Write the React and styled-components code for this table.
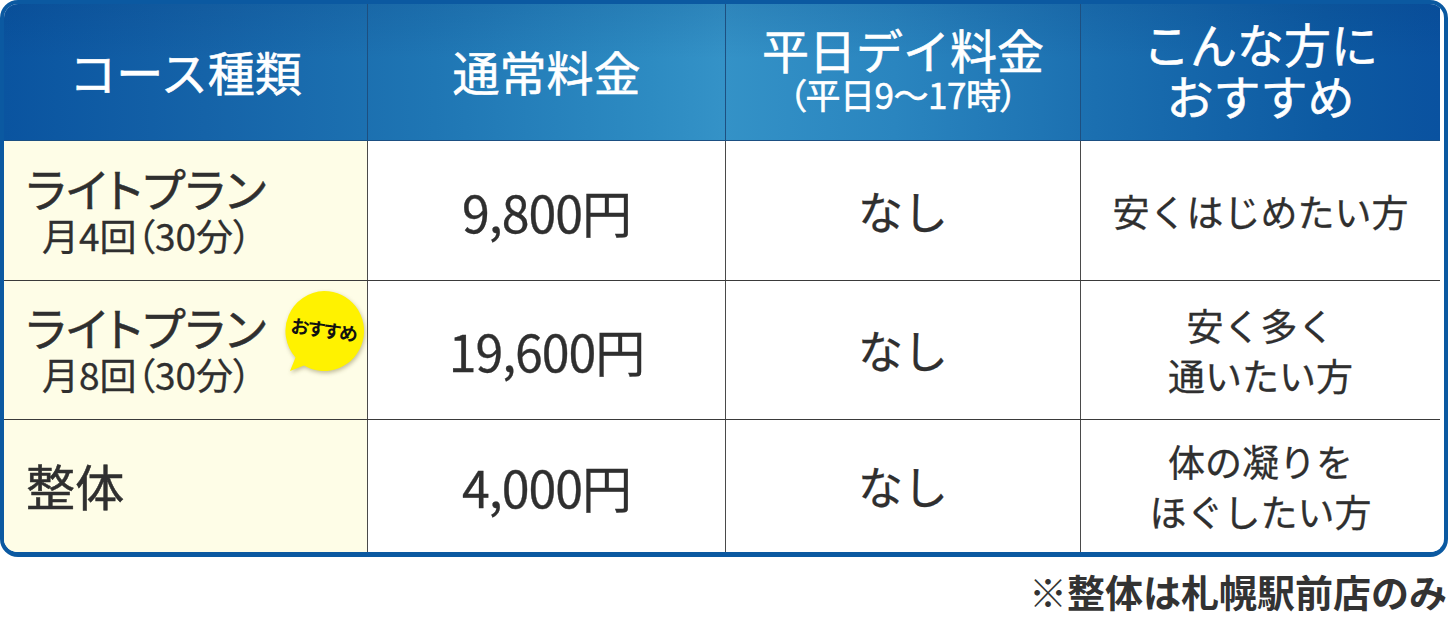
import React from "react";
import styled, { createGlobalStyle } from "styled-components";

const Global = createGlobalStyle`
  html, body { margin: 0; padding: 0; background: #ffffff; }
  body {
    font-family: "Noto Sans CJK JP", "Noto Sans", sans-serif;
    color: #333;
  }
`;

const Page = styled.div`
  width: 1449px;
  display: flex;
  flex-direction: column;
`;

const Table = styled.div`
  width: 1448px;
  box-sizing: border-box;
  border: 4px solid #0b59a1;
  border-bottom-width: 5px;
  border-radius: 18px;
  overflow: hidden;
  display: grid;
  grid-template-columns: 363px 358px 355px 360px;
  grid-template-rows: 137px 139px 139px 133px;
`;

const HeaderRow = styled.div`
  grid-column: 1 / -1;
  display: grid;
  grid-template-columns: subgrid;
  background:
    linear-gradient(180deg, rgba(0, 40, 100, 0.12) 0%, rgba(0, 40, 100, 0) 40%),
    linear-gradient(90deg, #0a54a0 0%, #1563a8 14%, #1f76b4 30%, #2d8bc2 45%, #3492c7 50%, #2a85bf 62%, #1b6fb0 76%, #0d5aa2 92%, #0a52a0 100%);
  border-bottom: 1px solid #1b4f82;
`;

const HeadCell = styled.div`
  display: flex;
  flex-direction: column;
  align-items: center;
  justify-content: center;
  color: #ffffff;
  font-weight: 400;
  font-size: 47px;
  line-height: 52px;
  text-align: center;
  -webkit-text-stroke: 0.6px #ffffff;
  border-left: ${(p) => (p.$first ? "none" : "1px solid #1d4f80")};
  padding-bottom: ${(p) => p.$pb || 2}px;
`;

const HeadSub = styled.span`
  font-size: 35px;
  line-height: 38px;
  letter-spacing: -0.5px;
  font-feature-settings: "palt";
`;

const Row = styled.div`
  grid-column: 1 / -1;
  display: grid;
  grid-template-columns: subgrid;
  border-top: ${(p) => (p.$first ? "none" : "1.5px solid #3a3a3a")};
`;

const NameCell = styled.div`
  position: relative;
  background: #fefde7;
  display: flex;
  flex-direction: column;
  justify-content: center;
  padding-left: 22px;
  padding-bottom: 2px;
  color: #2f2f2f;
  font-feature-settings: "palt";
`;

const PlanName = styled.span`
  font-size: ${(p) => p.$size || 46}px;
  line-height: 50px;
  font-weight: 400;
  -webkit-text-stroke: 0.5px #2f2f2f;
  letter-spacing: 0.3px;
`;

const PlanSub = styled.span`
  font-size: 37px;
  line-height: 46px;
  padding-left: 16px;
  font-weight: 400;
  -webkit-text-stroke: 0.3px #2f2f2f;
`;

const ValueCell = styled.div`
  display: flex;
  align-items: center;
  justify-content: center;
  text-align: center;
  background: #ffffff;
  border-left: 1.5px solid #4a4a4a;
  color: #2f2f2f;
  font-size: ${(p) => p.$size || 42}px;
  line-height: ${(p) => p.$lh || 50}px;
  font-weight: 400;
  -webkit-text-stroke: 0.3px #2f2f2f;
  letter-spacing: ${(p) => p.$ls || 0}px;
`;

const Badge = styled.div`
  position: absolute;
  left: 278px;
  top: 8px;
  width: 84px;
  height: 84px;
  display: flex;
  align-items: center;
  justify-content: center;
`;

const BadgeShape = styled.svg`
  position: absolute;
  inset: 0;
  filter: drop-shadow(1px 2px 2px rgba(120, 110, 60, 0.45));
`;

const BadgeText = styled.span`
  position: relative;
  font-size: 18.5px;
  font-weight: 700;
  color: #111;
  transform: rotate(8deg);
  letter-spacing: -0.8px;
  margin-top: -4px;
  white-space: nowrap;
`;

const Note = styled.div`
  align-self: flex-end;
  margin-top: 12px;
  margin-right: 2px;
  font-size: 38px;
  line-height: 44px;
  font-weight: 700;
  color: #333;
`;

const rows = [
  { name: "ライトプラン", sub: "月4回（30分）", price: "9,800円", day: "なし", rec: ["安くはじめたい方"], badge: false },
  { name: "ライトプラン", sub: "月8回（30分）", price: "19,600円", day: "なし", rec: ["安く多く", "通いたい方"], badge: true },
  { name: "整体", sub: null, price: "4,000円", day: "なし", rec: ["体の凝りを", "ほぐしたい方"], badge: false, size: 49 },
];

export default function App() {
  return (
    <Page>
      <Global />
      <Table>
        <HeaderRow>
          <HeadCell $first>コース種類</HeadCell>
          <HeadCell>通常料金</HeadCell>
          <HeadCell $pb={8}>
            平日デイ料金
            <HeadSub>（平日9〜17時）</HeadSub>
          </HeadCell>
          <HeadCell $pb={6}>
            こんな方に
            <br />
            おすすめ
          </HeadCell>
        </HeaderRow>
        {rows.map((r, i) => (
          <Row key={i} $first={i === 0}>
            <NameCell>
              <PlanName $size={r.size}>{r.name}</PlanName>
              {r.sub && <PlanSub>{r.sub}</PlanSub>}
              {r.badge && (
                <Badge>
                  <BadgeShape viewBox="0 0 84 84" width="84" height="84">
                    <path
                      d="M42 2 A40 40 0 1 1 22 76.6 L8 82 L13.5 68.5 A40 40 0 0 1 42 2 Z"
                      fill="#fff200"
                    />
                  </BadgeShape>
                  <BadgeText>おすすめ</BadgeText>
                </Badge>
              )}
            </NameCell>
            <ValueCell $size={50} $ls={-1}>{r.price}</ValueCell>
            <ValueCell $size={45}>{r.day}</ValueCell>
            <ValueCell $size={37} $lh={50}>
              <div>
                {r.rec.map((t, j) => (
                  <div key={j}>{t}</div>
                ))}
              </div>
            </ValueCell>
          </Row>
        ))}
      </Table>
      <Note>※整体は札幌駅前店のみ</Note>
    </Page>
  );
}
